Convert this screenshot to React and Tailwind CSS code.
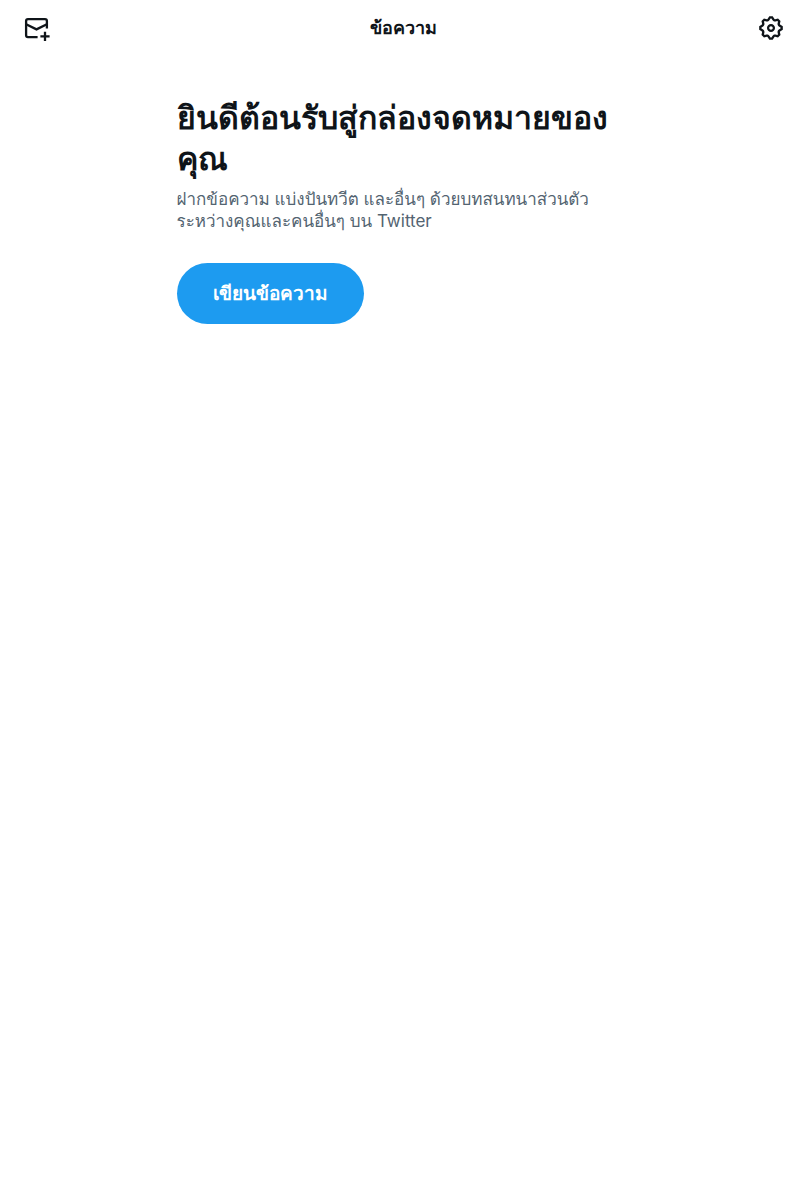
export default function App() {
  return (
    <div className="min-h-screen bg-white text-[#0f1419] font-['Liberation_Sans',sans-serif]">
      <header className="grid h-14 grid-cols-[1fr_auto_1fr] items-center px-6">
        <button type="button" aria-label="เขียนข้อความใหม่" className="justify-self-start">
          <svg viewBox="0 0 26 26" className="size-[26px]" fill="none" stroke="currentColor" strokeWidth="2.3">
            <path d="M13.600 22.200H4C2.800 22.200 2.100 21.500 2.100 20.300V6C2.100 4.800 2.800 4.100 4 4.100H21C22.200 4.100 22.900 4.800 22.900 6V13.600" />
            <path d="M2.100 9.300L12.500 14.400L22.900 9.300" />
            <path d="M21 16.800V26M16.400 21.400H25.600" />
          </svg>
        </button>
        <h1 className="text-lg leading-6 font-bold">ข้อความ</h1>
        <button type="button" aria-label="การตั้งค่า" className="justify-self-end">
          <svg viewBox="1.6 1.6 20.8 20.8" className="size-6" fill="currentColor">
            <path d="M10.540 1.750h2.920l1.570 2.360c.110.170.320.250.530.210l2.530-.590 2.170 2.170-.580 2.540c-.050.200.040.410.210.530l2.360 1.570v2.920l-2.360 1.570c-.170.120-.260.330-.210.530l.580 2.540-2.170 2.170-2.530-.590c-.210-.040-.420.040-.530.210l-1.570 2.360h-2.920l-1.580-2.360c-.110-.170-.320-.250-.520-.210l-2.540.590-2.170-2.170.580-2.540c.050-.200-.030-.410-.210-.530l-2.350-1.570v-2.920L4.100 8.970c.180-.120.260-.330.210-.530L3.730 5.900 5.900 3.730l2.540.590c.200.040.410-.040.520-.210l1.580-2.360zm1.070 2l-.980 1.470C10.050 6.080 9 6.500 7.990 6.270l-1.460-.340-.600.600.330 1.460c.240 1.010-.180 2.070-1.050 2.640l-1.460.980v.780l1.460.980c.870.570 1.290 1.630 1.050 2.640l-.330 1.460.600.600 1.460-.340c1.010-.230 2.060.190 2.640 1.050l.980 1.470h.780l.970-1.470c.580-.860 1.630-1.280 2.650-1.050l1.450.340.610-.600-.340-1.460c-.230-1.010.180-2.070 1.050-2.640l1.470-.980v-.780l-1.470-.980c-.870-.570-1.280-1.630-1.050-2.640l.340-1.460-.610-.600-1.450.340c-1.020.230-2.070-.190-2.650-1.050l-.970-1.470h-.780zM12 10.500c-.830 0-1.500.670-1.500 1.500s.670 1.500 1.500 1.500c.820 0 1.500-.670 1.500-1.500s-.680-1.500-1.500-1.500zM8.500 12c0-1.930 1.560-3.500 3.500-3.500 1.930 0 3.500 1.570 3.500 3.500s-1.570 3.500-3.500 3.500c-1.940 0-3.500-1.570-3.500-3.500z" />
          </svg>
        </button>
      </header>
      <main className="mx-auto w-full max-w-[454px] pt-[42px]">
        <h2 className="text-[32px] leading-[41px] font-bold">ยินดีต้อนรับสู่กล่องจดหมายของคุณ</h2>
        <p className="mt-2 text-[17px] leading-[22px] text-[#536471] font-[Inter,Loma,sans-serif]">ฝากข้อความ แบ่งปันทวีต และอื่นๆ ด้วยบทสนทนาส่วนตัวระหว่างคุณและคนอื่นๆ บน Twitter</p>
        <button type="button" className="mt-[31px] rounded-full bg-[#1d9bf0] px-9 py-4 text-[19px] leading-[29px] font-bold text-white">เขียนข้อความ</button>
      </main>
    </div>
  );
}
